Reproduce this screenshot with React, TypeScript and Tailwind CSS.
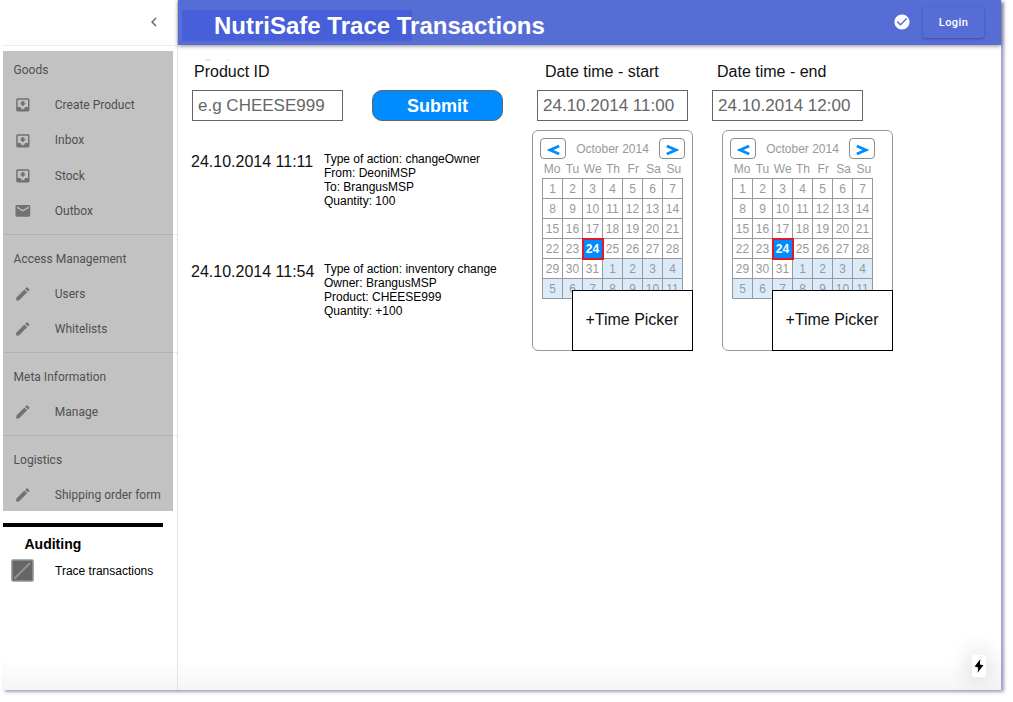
import React from "react";
import {
  MdCheckCircle,
  MdChevronLeft,
  MdEdit,
  MdEmail,
  MdMoveToInbox,
} from "react-icons/md";
import type { IconType } from "react-icons";

type Item = { label: string; icon: IconType };
type Group = { title: string; items: Item[] };

const groups: Group[] = [
  {
    title: "Goods",
    items: [
      { label: "Create Product", icon: MdMoveToInbox },
      { label: "Inbox", icon: MdMoveToInbox },
      { label: "Stock", icon: MdMoveToInbox },
      { label: "Outbox", icon: MdEmail },
    ],
  },
  {
    title: "Access Management",
    items: [
      { label: "Users", icon: MdEdit },
      { label: "Whitelists", icon: MdEdit },
    ],
  },
  { title: "Meta Information", items: [{ label: "Manage", icon: MdEdit }] },
  { title: "Logistics", items: [{ label: "Shipping order form", icon: MdEdit }] },
];

function Sidebar() {
  return (
    <aside className="flex h-full w-[176px] shrink-0 flex-col border-r border-[#e4e4e4]">
      <div className="flex h-[46px] shrink-0 items-center justify-end border-b border-[#ececec] pr-[14px] pb-[2px]">
        <MdChevronLeft className="size-[18px] text-[#6b6b6b]" />
      </div>
      <nav className="mt-[4.5px] ml-[0.6px] h-[460px] w-[170px] shrink-0 bg-[#c2c2c2] font-[Roboto,sans-serif] text-[12px] text-[#505050]">
        {groups.map((group, i) => (
          <section
            key={group.title}
            className={
              i === 0
                ? "pt-[1.7px] pb-[5.3px]"
                : "w-[175px] border-t border-[#00000014] pt-[6px] pb-[5.3px]"
            }
          >
            <h2 className="flex h-[35.3px] items-center pl-[11px]">{group.title}</h2>
            {group.items.map(({ label, icon: Icon }) => (
              <div key={label} className="flex h-[35.3px] items-center pl-[11px]">
                <Icon className="size-[17.7px] shrink-0 text-[#727272]" />
                <span className="ml-[23.5px] whitespace-nowrap">{label}</span>
              </div>
            ))}
          </section>
        ))}
      </nav>
      <div className="mt-[12.5px] ml-[1px] h-[4px] w-[160px] shrink-0 bg-black" />
      <h2 className="mt-[7px] pl-[22.5px] text-[14px] leading-[20px] font-bold">Auditing</h2>
      <div className="mt-[5px] flex h-[23px] items-center pl-[9px]">
        <svg className="size-[23px]" viewBox="0 0 23 23">
          <rect x="1" y="1" width="21" height="21" rx="1" fill="#666" stroke="#929292" strokeWidth="1.6" />
          <path d="M3.5 19.5 19 4" stroke="#929292" strokeWidth="2.2" />
        </svg>
        <span className="ml-[21px] text-[12px]">Trace transactions</span>
      </div>
    </aside>
  );
}

function Header() {
  return (
    <header className="relative z-10 flex h-[45px] shrink-0 items-center bg-[#576dd6] text-white shadow-[0_1px_4px_rgba(0,0,0,0.45)]">
      <div className="mt-[6px] ml-[4px] flex h-[31px] w-[230px] items-center bg-[#475fd8] pl-[32px]">
        <h1 className="text-[24px] leading-[31px] font-bold whitespace-nowrap">
          NutriSafe Trace Transactions
        </h1>
      </div>
      <MdCheckCircle className="mb-[1px] ml-auto size-[18px]" />
      <button className="mr-[17px] ml-[12px] h-[31px] w-[61px] rounded-[3px] bg-[#576dd6] pt-[1px] font-[Roboto,sans-serif] text-[11px] font-medium tracking-[0.4px] shadow-[0_1px_3px_rgba(0,0,0,0.3)]">
        Login
      </button>
    </header>
  );
}

function Field({ value }: { value: string }) {
  return (
    <div className="flex h-[31px] w-[151px] items-center border border-[#666] bg-white pl-[5px] text-[17px] whitespace-nowrap text-[#666]">
      {value}
    </div>
  );
}

function Entry({ time, lines }: { time: string; lines: string[] }) {
  return (
    <article className="flex h-[110px]">
      <time className="w-[133px] text-[16px] leading-[20px] text-[#111]">{time}</time>
      <div className="text-[12px] leading-[14px] text-black">
        {lines.map((line) => (
          <p key={line}>{line}</p>
        ))}
      </div>
    </article>
  );
}

const weekdays = ["Mo", "Tu", "We", "Th", "Fr", "Sa", "Su"];
const days = Array.from({ length: 42 }, (_, i) => (i < 31 ? i + 1 : i - 30));

function Arrow({ right }: { right?: boolean }) {
  return (
    <button className="flex h-[21px] w-[26px] items-center justify-center rounded-[4px] border border-[#8c8c8c] bg-white">
      <svg className="mt-[3px] h-[12px] w-[13px]" viewBox="0 0 13 12" fill="none">
        <path
          d={right ? "M0.8 1.9 10 6 0.8 10.1" : "M12.2 1.9 3 6 12.2 10.1"}
          stroke="#008cff"
          strokeWidth="2.7"
        />
      </svg>
    </button>
  );
}

function Calendar({ wide }: { wide?: boolean }) {
  return (
    <div
      className={
        (wide ? "w-[171px]" : "w-[161px]") +
        " relative h-[221px] rounded-[6px] border border-[#999] bg-white pt-[7px] pl-[7px] text-[12px] text-[#999]"
      }
    >
      <div className="flex w-[145px] items-center justify-between">
        <Arrow />
        <span>October 2014</span>
        <Arrow right />
      </div>
      <div className="ml-[2px] grid w-[142px] grid-cols-7 pt-[1px] leading-[18px]">
        {weekdays.map((day) => (
          <span key={day} className="flex justify-center">{day}</span>
        ))}
      </div>
      <div className="ml-[2px] grid w-[141px] auto-rows-[20px] grid-cols-[repeat(7,20px)] border-t border-l border-[#999] text-center leading-[20px]">
        {days.map((day, i) => (
          <span
            key={i}
            className={
              i === 23
                ? "relative z-10 -mt-[1.5px] -ml-[1.5px] h-[22px] w-[22px] border-2 border-[#e0182c] bg-[#008cff] leading-[19px] font-bold text-white"
                : i > 30
                  ? "border-r border-b border-[#999] bg-[#dcebfa]"
                  : "border-r border-b border-[#999]"
            }
          >
            {day}
          </span>
        ))}
      </div>
      <div className="absolute -right-px -bottom-px z-20 flex h-[61px] w-[121px] items-center justify-center border border-black bg-white pr-[1px] pb-[2px] text-[16px] text-[#111]">
        +Time Picker
      </div>
    </div>
  );
}

export default function App() {
  return (
    <div className="h-[702px] w-[1013px] overflow-hidden bg-white pl-[2px] font-['Liberation_Sans',Arial,sans-serif]">
      <div className="flex h-[690px] w-[999px] bg-[linear-gradient(to_bottom,#fff_0,#fff_660px,#f5f5f5_690px)] shadow-[3px_2px_3px_0px_rgba(80,80,145,0.55)]">
        <Sidebar />
        <div className="flex min-w-0 flex-1 flex-col">
          <Header />
          <main className="relative flex flex-1">
            <svg className="absolute top-[13px] left-[26px] h-[3px] w-[28px]" viewBox="0 0 28 3" fill="none">
              <path d="M1 2.5Q4 0 7 2.5M24 1.5V3" stroke="#d0d0d0" />
            </svg>
            <section className="w-[354px] pl-[13px]">
              <h2 className="ml-[3px] pt-[17px] text-[16px] leading-[20px] text-[#111]">Product ID</h2>
              <div className="mt-[8px] ml-[1px] flex gap-[29px]">
                <Field value="e.g CHEESE999" />
                <button className="h-[31px] w-[131px] rounded-[10px] border border-[#666] bg-[#008cff] pt-[2px] text-[18px] leading-[27px] font-bold text-white">
                  Submit
                </button>
              </div>
              <div className="mt-[31px]">
                <Entry
                  time="24.10.2014 11:11"
                  lines={[
                    "Type of action: changeOwner",
                    "From: DeoniMSP",
                    "To: BrangusMSP",
                    "Quantity: 100",
                  ]}
                />
                <Entry
                  time="24.10.2014 11:54"
                  lines={[
                    "Type of action: inventory change",
                    "Owner: BrangusMSP",
                    "Product: CHEESE999",
                    "Quantity: +100",
                  ]}
                />
              </div>
            </section>
            <section>
              <div className="flex pt-[17px] pl-[13px] text-[16px] leading-[20px] text-[#111]">
                <h2 className="w-[172px]">Date time - start</h2>
                <h2>Date time - end</h2>
              </div>
              <div className="mt-[8px] ml-[5px] flex gap-[24px]">
                <Field value="24.10.2014 11:00" />
                <Field value="24.10.2014 12:00" />
              </div>
              <div className="mt-[9px] flex gap-[29px]">
                <Calendar />
                <Calendar wide />
              </div>
            </section>
            <button className="absolute right-[15px] bottom-[13px] flex h-[22px] w-[14px] items-center justify-center rounded-[2px] bg-white shadow-[0_0_20px_6px_rgba(0,0,0,0.09)]">
              <svg className="h-[14px] w-[10px]" viewBox="0 0 10 14">
                <path d="M6.3 0.3 0.6 7.5 4.2 8.4 3.6 13.7 9.4 6.3 5.9 5.5Z" fill="#000" />
              </svg>
            </button>
          </main>
        </div>
      </div>
    </div>
  );
}
